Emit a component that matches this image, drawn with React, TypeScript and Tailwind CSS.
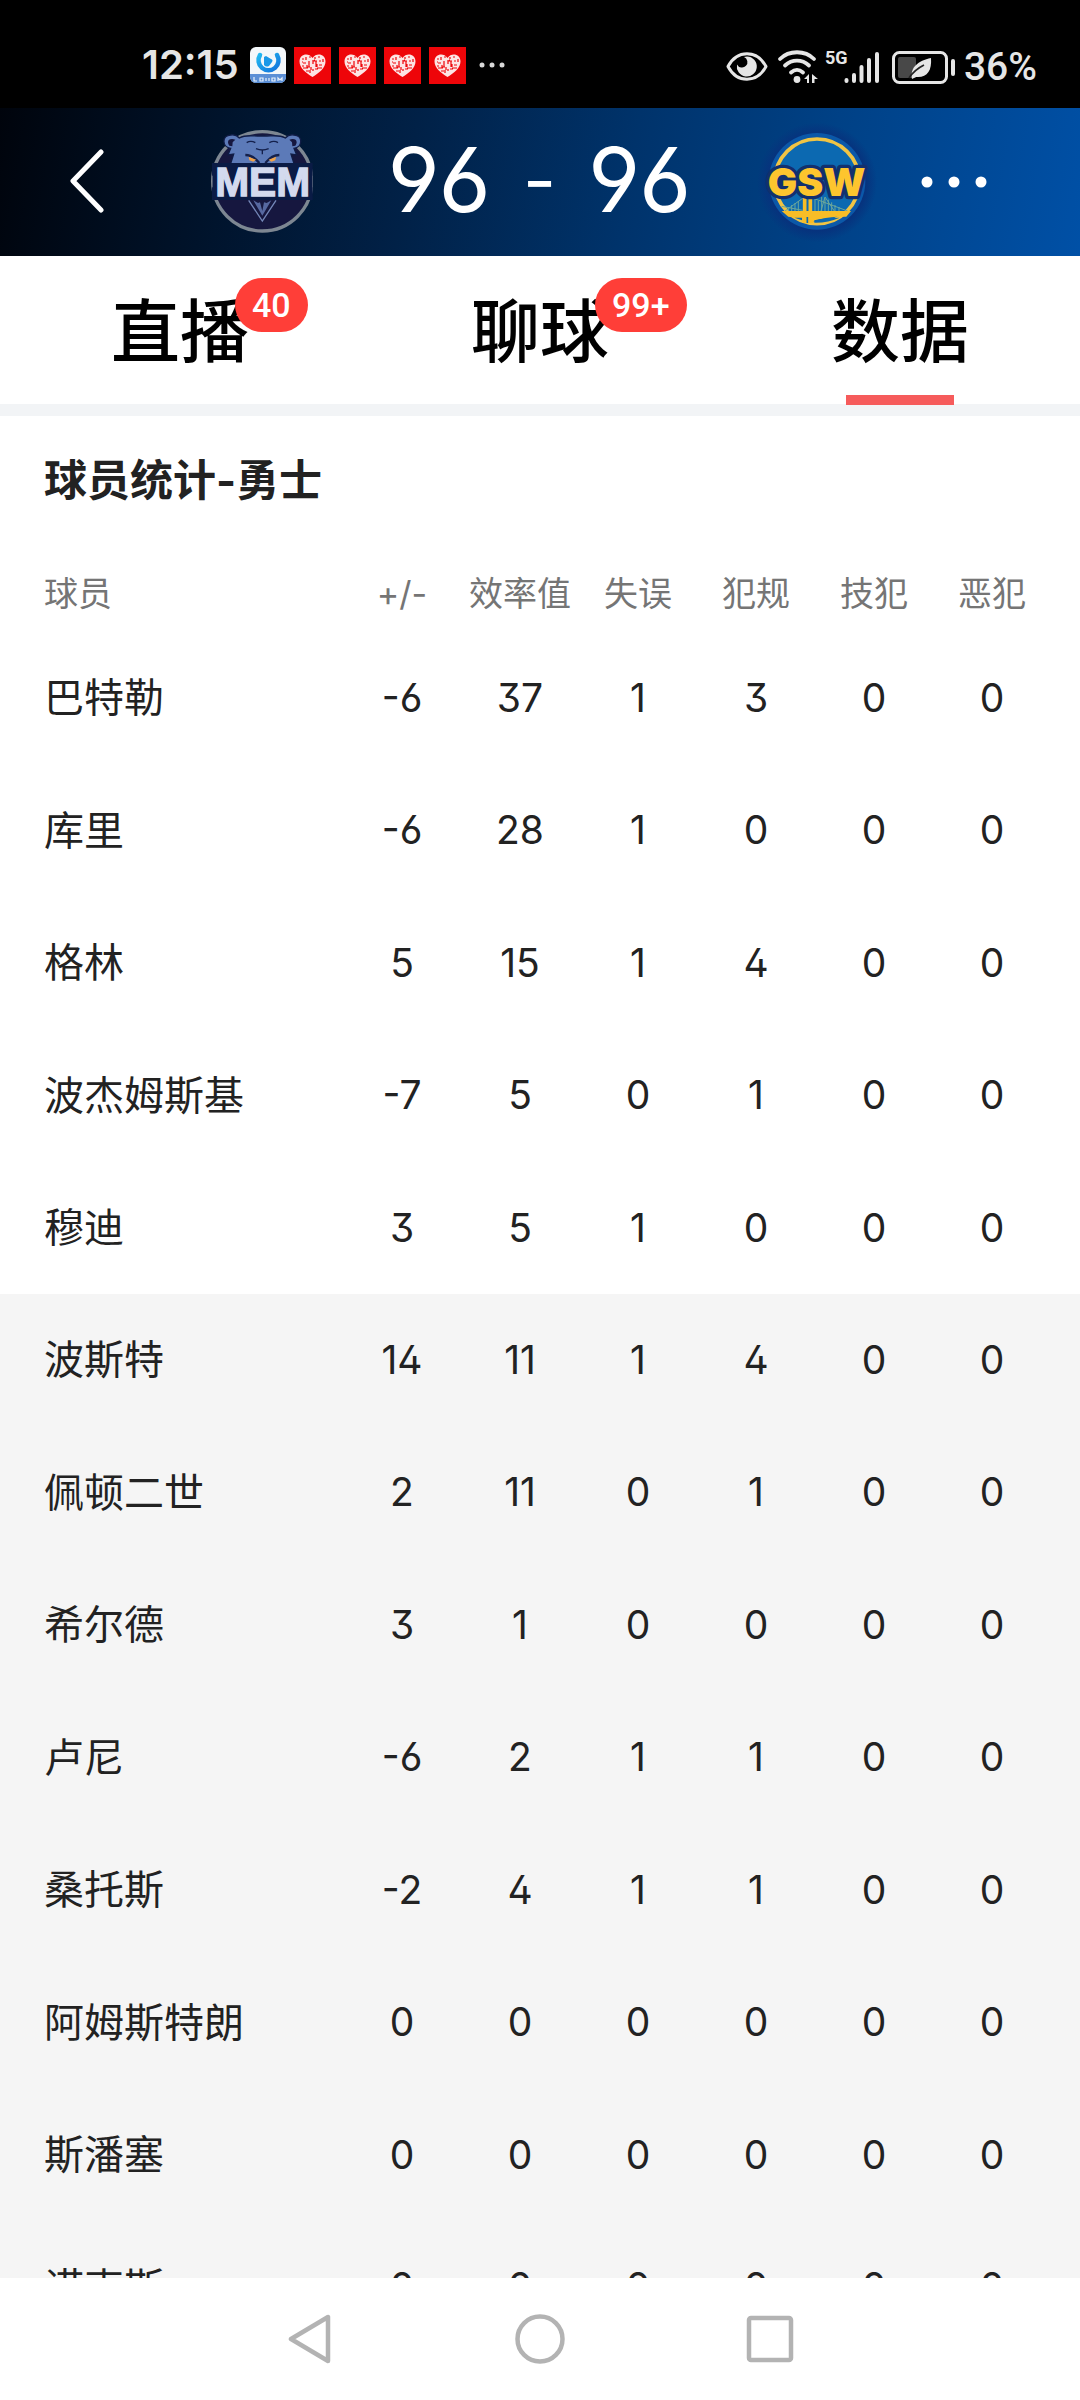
import React from "react";

type Row = { name: string; stats: number[] };

const columns = ["+/-", "效率值", "失误", "犯规", "技犯", "恶犯"];

const starters: Row[] = [
  { name: "巴特勒", stats: [-6, 37, 1, 3, 0, 0] },
  { name: "库里", stats: [-6, 28, 1, 0, 0, 0] },
  { name: "格林", stats: [5, 15, 1, 4, 0, 0] },
  { name: "波杰姆斯基", stats: [-7, 5, 0, 1, 0, 0] },
  { name: "穆迪", stats: [3, 5, 1, 0, 0, 0] },
];

const bench: Row[] = [
  { name: "波斯特", stats: [14, 11, 1, 4, 0, 0] },
  { name: "佩顿二世", stats: [2, 11, 0, 1, 0, 0] },
  { name: "希尔德", stats: [3, 1, 0, 0, 0, 0] },
  { name: "卢尼", stats: [-6, 2, 1, 1, 0, 0] },
  { name: "桑托斯", stats: [-2, 4, 1, 1, 0, 0] },
  { name: "阿姆斯特朗", stats: [0, 0, 0, 0, 0, 0] },
  { name: "斯潘塞", stats: [0, 0, 0, 0, 0, 0] },
  { name: "诺克斯", stats: [0, 0, 0, 0, 0, 0] },
];

const tabs = [
  { label: "直播", badge: "40", active: false },
  { label: "聊球", badge: "99+", active: false },
  { label: "数据", badge: "", active: true },
];

const LiveIcon = (): React.JSX.Element => (
  <svg viewBox="0 0 36 36" className="h-9 w-9">
    <defs>
      <clipPath id="live">
        <rect width="36" height="36" rx="6" />
      </clipPath>
      <linearGradient id="liveRing" x1="0" y1="0" x2="1" y2="1">
        <stop offset="0" stopColor="#22b8f0" />
        <stop offset="1" stopColor="#1273dc" />
      </linearGradient>
    </defs>
    <g clipPath="url(#live)">
      <rect width="36" height="36" fill="#f3f7fa" />
      <rect y="27" width="36" height="9" fill="#5b8fd6" />
      <path d="M4 30v4h3M10 31h3v3h-3zM16 31v3M19 31v3M22 31h3v3h-3zM28 34v-3l2 2l2-2v3" stroke="#e8f1fb" strokeWidth="1.2" fill="none" />
      <path d="M10 8a10 10 0 1 0 17 0" fill="none" stroke="url(#liveRing)" strokeWidth="4.5" strokeLinecap="round" />
      <path d="M14 10v8a4 4 0 0 0 5 1l3-4a2 2 0 0 0-1-3l-5-3z" fill="#1a98e8" />
    </g>
  </svg>
);

const HeartIcon = (): React.JSX.Element => (
  <svg viewBox="0 0 37 37" className="h-[37px] w-[37px]">
    <rect width="37" height="37" fill="#ee0509" />
    <path d="M18.5 30C12 26 5.5 21 5.5 14.5C5.5 7 14.5 5 18.5 11C22.5 5 31.5 7 31.5 14.5C31.5 21 25 26 18.5 30Z" fill="#fde4e4" />
    <path
      d="M8 12h2m2-2v3m3-3h2m-8 6h3m-4 3h2m3-1v3m-1 3h3m6-14v2m3-2h2m3 2v3m-4-1h2m1 4h-3m-2-1v3m-2 2h3m-8 1v3m3-4v2m-6-4h3m3-6h4m-4 3v-4m4 4v3m-6 0v3m-9-8h1m11-2h1M15 14v6M22 14v6M9 21h5M23 21h5"
      stroke="#ee0509"
      strokeWidth="1.2"
      fill="none"
    />
  </svg>
);

const StatusIcons = (): React.JSX.Element => (
  <svg viewBox="0 0 232 40" className="h-10 w-[232px] overflow-visible" fill="#e6e6e6">
    {/* eye */}
    <path d="M4 21.5C13 4.5 33 4.5 42 21.5C33 38.5 13 38.5 4 21.5Z" fill="none" stroke="#e6e6e6" strokeWidth="3" strokeLinejoin="round" />
    <path d="M23 11.5A10 10 0 1 1 13 19.5A5.5 5.5 0 1 0 20 12Z" />
    {/* wifi */}
    <g fill="none" stroke="#e6e6e6" strokeWidth="3.8" strokeLinecap="round">
      <path d="M56 14C65 5 81 5 90 14" />
      <path d="M61 20.5C68 14 78 14 85 20.5" />
      <path d="M67 27.5C71 24 75 24 79 27.5" />
    </g>
    <circle cx="73" cy="34.5" r="3.4" />
    <path d="M85 29v9h-2v-4h-3zM88 29l6 5h-3.5v4h-2.5z" />
    {/* signal */}
    <text x="101" y="19" fontSize="18" fontWeight="700" fontFamily="Roboto, sans-serif">
      5G
    </text>
    <g stroke="#e6e6e6" strokeWidth="4" strokeLinecap="round">
      <path d="M122.5 35v1M130 30v6M137.5 22v14M145 15v21M153 9v27" />
    </g>
    {/* battery */}
    <rect x="169.5" y="7.5" width="53" height="30" rx="6" fill="none" stroke="#e6e6e6" strokeWidth="3" />
    <rect x="174" y="12" width="18" height="21" rx="2" fill="#484848" />
    <path d="M207 13C208 26 203 33 192 32L188 34C186 22 194 16 207 13Z" />
    <path d="M185 33C189 27 194 23 200 20" fill="none" stroke="#222" strokeWidth="1.8" />
    <rect x="227" y="14" width="4" height="17" rx="2" />
  </svg>
);

const MemLogo = (): React.JSX.Element => (
  <svg viewBox="33 33 306 312" className="h-[104px] w-[102px]">
    <circle cx="187" cy="187" r="149" fill="#16173f" stroke="#7d8792" strokeWidth="10" />
    <path
      d="M92 134L101 105L84 108L92 88C66 84 64 50 92 48C104 46 112 50 118 57C138 45 158 52 187 51C216 52 236 45 256 57C262 50 270 46 282 48C310 50 308 84 282 88L290 108L273 105L282 134Z"
      fill="#5c7ab8"
      stroke="#101c45"
      strokeWidth="4"
    />
    <path d="M88 80C78 66 88 56 106 62L98 70L97 82ZM286 80C296 66 286 56 268 62L276 70L277 82Z" fill="#16173f" />
    <g fill="none" stroke="#14204b" strokeWidth="4">
      <path d="M140 71Q152 63 166 71M208 71Q222 63 234 71M168 89Q187 97 206 89M187 94V106" />
      <path d="M136 108Q158 108 178 132M238 108Q216 108 196 132" strokeWidth="7" />
    </g>
    <path d="M146 113L168 122L160 128L148 124ZM228 113L206 122L214 128L226 124Z" fill="#f0a34a" />
    <rect x="36" y="132" width="302" height="111" fill="#0a1b45" />
    <path d="M37 170V205M339 170V205" stroke="#7d8792" strokeWidth="2" />
    <path d="M146 244L187 306L228 244" fill="none" stroke="#7487b8" strokeWidth="4" />
    <path d="M160 244L187 290L214 244L200 252L192 250L187 276L180 250L174 252Z" fill="#5668a0" />
    <text x="188" y="232" textAnchor="middle" fontSize="122" fontWeight="700" fontFamily="Liberation Sans, sans-serif" fill="#d3daee" stroke="#d3daee" strokeWidth="4">
      MEM
    </text>
  </svg>
);

const GswLogo = (): React.JSX.Element => (
  <svg viewBox="35 33 306 312" className="h-[104px] w-[102px] overflow-visible">
    <defs>
      <radialGradient id="gswGlow">
        <stop offset="0.8" stopColor="#07327d" />
        <stop offset="1" stopColor="#07327d" stopOpacity="0" />
      </radialGradient>
    </defs>
    <circle cx="188" cy="190" r="180" fill="url(#gswGlow)" />
    <circle cx="188" cy="187" r="145" fill="#0b58a8" />
    <circle cx="188" cy="187" r="127" fill="#0c69b1" stroke="#f0c444" strokeWidth="11" />
    <path
      d="M92 276L145 238M102 276L102 264M112 276V258M122 276V252M132 276V246M82 262L145 274M172 236L280 276M182 276V240M192 276V246M202 276V234M212 276V238M222 276V242M232 276V250M242 276V258M254 276V264M200 276L212 234L240 276"
      stroke="#6ba79b"
      strokeWidth="3"
      fill="none"
    />
    <path d="M82 276H290L276 293H248Q215 294 178 306V312H144V304Q125 294 102 293Z" fill="#f7bd27" />
    <path d="M120 296H143V304ZM180 304Q210 296 256 296Q220 312 180 311Z" fill="#0c69b1" />
    <path d="M151 236V276M168 236V276" stroke="#f7bd27" strokeWidth="11" />
    <path d="M159 294V312" stroke="#0c69b1" strokeWidth="5" />
    <text
      x="187"
      y="230"
      textAnchor="middle"
      fontSize="117"
      fontWeight="900"
      fontFamily="Inter, sans-serif"
      fill="#fdc52e"
      stroke="#12306e"
      strokeWidth="20"
      strokeLinejoin="round"
      paintOrder="stroke"
    >
      GSW
    </text>
  </svg>
);

const StatusBar = (): React.JSX.Element => (
  <div className="flex h-[108px] shrink-0 items-center justify-between bg-black pt-[22px] pr-[43px] pl-[142px] text-[#e6e6e6]">
    <div className="flex items-center gap-2">
      <span className="mr-1 w-24 text-[40px] leading-10 font-semibold">12:15</span>
      <LiveIcon />
      <HeartIcon />
      <HeartIcon />
      <HeartIcon />
      <HeartIcon />
      <svg viewBox="0 0 40 10" className="h-[10px] w-10" fill="#d8d8d8">
        <circle cx="8" cy="5" r="2.5" />
        <circle cx="18" cy="5" r="2.5" />
        <circle cx="28" cy="5" r="2.5" />
      </svg>
    </div>
    <div className="flex items-center gap-2">
      <StatusIcons />
      <span className="pt-1 font-['Roboto',sans-serif] text-[39px] leading-10 font-medium">36%</span>
    </div>
  </div>
);

const ScoreHeader = (): React.JSX.Element => (
  <header className="grid h-[148px] shrink-0 grid-cols-[211px_102px_1fr_102px_212px] items-center bg-[linear-gradient(100deg,#00040c_0%,#00132b_20%,#012147_38%,#00336b_58%,#004186_76%,#0050a6_100%)] text-white">
    <button type="button" aria-label="返回" className="flex h-full items-center pl-[68px]">
      <svg viewBox="0 0 38 66" className="h-[66px] w-[38px]" fill="none" stroke="#fff" strokeWidth="5" strokeLinecap="round" strokeLinejoin="round">
        <path d="M33 3L5 32L33 61" />
      </svg>
    </button>
    <MemLogo />
    <p className="flex items-center justify-center gap-8 pb-1 text-[90px] leading-none font-normal">
      <span>96</span>
      <span className="text-[72px]">-</span>
      <span>96</span>
    </p>
    <GswLogo />
    <button type="button" aria-label="更多" className="flex h-full items-center pl-[53px]">
      <svg viewBox="0 0 66 12" className="h-3 w-[66px]" fill="#fff">
        <circle cx="6" cy="6" r="5.5" />
        <circle cx="33" cy="6" r="5.5" />
        <circle cx="60" cy="6" r="5.5" />
      </svg>
    </button>
  </header>
);

const Tabs = (): React.JSX.Element => (
  <nav className="grid h-40 shrink-0 grid-cols-3 border-b-12 border-[#f2f4f6]">
    {tabs.map((tab) => (
      <button key={tab.label} type="button" className="relative flex items-center justify-center pt-1 text-[69px] leading-none font-medium text-black">
        {tab.label}
        {tab.badge && (
          <span className="absolute top-[22px] left-1/2 ml-[55px] flex h-[54px] items-center rounded-full bg-[#ff3e38] px-[17px] font-['Roboto',sans-serif] text-[34px] text-white">
            {tab.badge}
          </span>
        )}
        {tab.active && <span className="absolute -bottom-px h-[10px] w-[108px] bg-[#f65b5b]" />}
      </button>
    ))}
  </nav>
);

const PlayerRows = ({ rows }: { rows: Row[] }): React.JSX.Element => (
  <>
    {rows.map((row) => (
      <tr key={row.name} className="h-[132px] even:h-[133px]">
        <th scope="row" className="pl-11 text-left text-[40px] font-normal">
          {row.name}
        </th>
        {row.stats.map((stat, i) => (
          <td key={columns[i]} className="text-center text-[39px] last:pr-[29px]">
            {stat}
          </td>
        ))}
      </tr>
    ))}
  </>
);

const App = (): React.JSX.Element => (
  <div className="flex h-screen flex-col bg-white font-['Inter','Noto_Sans_CJK_SC',sans-serif] [font-feature-settings:'ss01']">
    <StatusBar />
    <ScoreHeader />
    <Tabs />
    <main className="min-h-0 flex-1 overflow-y-auto text-[#222] [scrollbar-width:none]">
      <h2 className="pt-8 pb-[42px] pl-11 text-[43px] leading-[64px] font-bold">球员统计-勇士</h2>
      <table className="w-full table-fixed border-collapse">
        <thead>
          <tr className="h-[78px] text-[34px] text-[#757575]">
            <th scope="col" className="pl-11 text-left font-normal">
              球员
            </th>
            {columns.map((column) => (
              <th key={column} scope="col" className="w-[118px] font-normal whitespace-nowrap last:w-[147px] last:pr-[29px]">
                {column}
              </th>
            ))}
          </tr>
        </thead>
        <tbody>
          <PlayerRows rows={starters} />
        </tbody>
        <tbody className="bg-[#f5f5f5]">
          <PlayerRows rows={bench} />
        </tbody>
      </table>
    </main>
    <nav className="flex h-[122px] shrink-0 items-center justify-center gap-[180px] bg-white">
      <button type="button" aria-label="后退">
        <svg viewBox="0 0 50 50" className="h-[50px] w-[50px]" fill="none" stroke="#b3b3b3" strokeWidth="4.5" strokeLinejoin="round">
          <path d="M43 3V47L6 25Z" />
        </svg>
      </button>
      <button type="button" aria-label="主页">
        <svg viewBox="0 0 50 50" className="h-[50px] w-[50px]" fill="none" stroke="#b3b3b3" strokeWidth="4.5">
          <circle cx="25" cy="25" r="22.5" />
        </svg>
      </button>
      <button type="button" aria-label="最近任务">
        <svg viewBox="0 0 50 50" className="h-[50px] w-[50px]" fill="none" stroke="#b3b3b3" strokeWidth="4.5">
          <rect x="4" y="4" width="42" height="42" rx="2" />
        </svg>
      </button>
    </nav>
  </div>
);

export default App;
